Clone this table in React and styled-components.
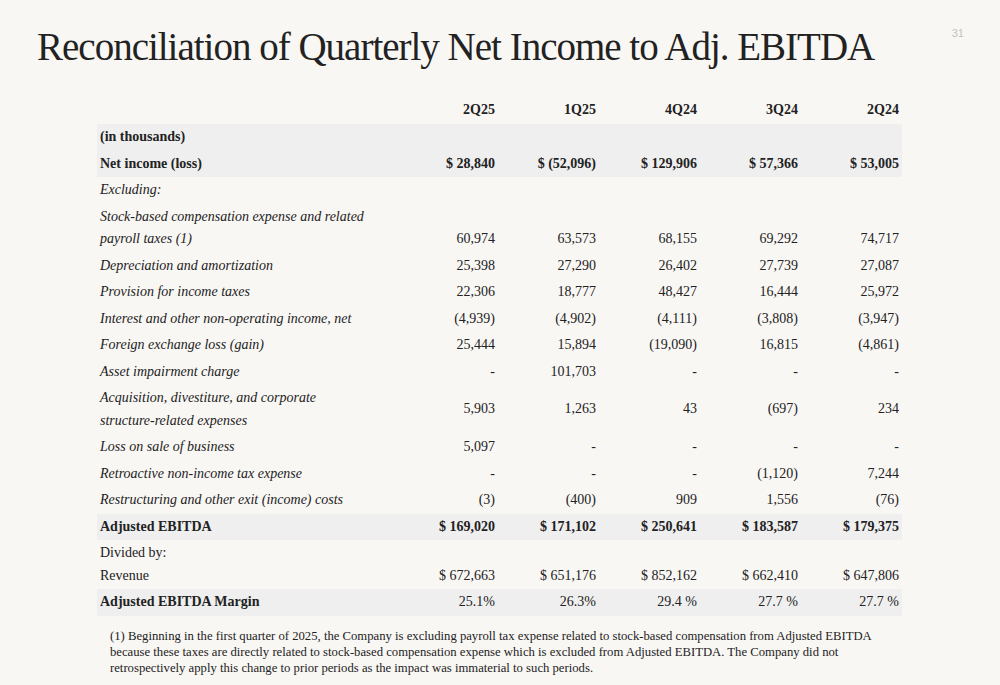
import React from "react";
import styled, { createGlobalStyle } from "styled-components";

const GlobalStyle = createGlobalStyle`
  html, body {
    margin: 0;
    padding: 0;
    background: #f9f7f4;
  }
  body {
    font-family: "Liberation Serif", "Times New Roman", serif;
    color: #222;
  }
`;

const periods = ["2Q25", "1Q25", "4Q24", "3Q24", "2Q24"];

const rows = [
  { label: "(in thousands)", kind: "bold", shade: true, values: [] },
  {
    label: "Net income (loss)",
    kind: "bold",
    shade: true,
    strong: true,
    values: ["$ 28,840", "$ (52,096)", "$ 129,906", "$ 57,366", "$ 53,005"],
  },
  { label: "Excluding:", kind: "italic", values: [] },
  {
    label: ["Stock-based compensation expense and related", "payroll taxes (1)"],
    kind: "italic",
    align: "bottom",
    values: ["60,974", "63,573", "68,155", "69,292", "74,717"],
  },
  {
    label: "Depreciation and amortization",
    kind: "italic",
    values: ["25,398", "27,290", "26,402", "27,739", "27,087"],
  },
  {
    label: "Provision for income taxes",
    kind: "italic",
    values: ["22,306", "18,777", "48,427", "16,444", "25,972"],
  },
  {
    label: "Interest and other non-operating income, net",
    kind: "italic",
    values: ["(4,939)", "(4,902)", "(4,111)", "(3,808)", "(3,947)"],
  },
  {
    label: "Foreign exchange loss (gain)",
    kind: "italic",
    values: ["25,444", "15,894", "(19,090)", "16,815", "(4,861)"],
  },
  {
    label: "Asset impairment charge",
    kind: "italic",
    values: ["-", "101,703", "-", "-", "-"],
  },
  {
    label: ["Acquisition, divestiture, and corporate", "structure-related expenses"],
    kind: "italic",
    values: ["5,903", "1,263", "43", "(697)", "234"],
  },
  {
    label: "Loss on sale of business",
    kind: "italic",
    values: ["5,097", "-", "-", "-", "-"],
  },
  {
    label: "Retroactive non-income tax expense",
    kind: "italic",
    values: ["-", "-", "-", "(1,120)", "7,244"],
  },
  {
    label: "Restructuring and other exit (income) costs",
    kind: "italic",
    values: ["(3)", "(400)", "909", "1,556", "(76)"],
  },
  {
    label: "Adjusted EBITDA",
    kind: "bold",
    shade: true,
    strong: true,
    values: ["$ 169,020", "$ 171,102", "$ 250,641", "$ 183,587", "$ 179,375"],
  },
  {
    label: ["Divided by:", "Revenue"],
    kind: "plain",
    align: "bottom",
    values: ["$ 672,663", "$ 651,176", "$ 852,162", "$ 662,410", "$ 647,806"],
  },
  {
    label: "Adjusted EBITDA Margin",
    kind: "bold",
    shade: true,
    values: ["25.1%", "26.3%", "29.4 %", "27.7 %", "27.7 %"],
  },
];

export default function App() {
  return (
    <>
      <GlobalStyle />
      <Page>
        <Header>
          <Title>Reconciliation of Quarterly Net Income to Adj. EBITDA</Title>
          <PageNumber>31</PageNumber>
        </Header>

        <Table>
          <colgroup>
            <col style={{ width: 300 }} />
            {periods.map((p) => (
              <col key={p} style={{ width: 101 }} />
            ))}
          </colgroup>
          <thead>
            <tr>
              <HeadCell />
              {periods.map((p) => (
                <HeadCell key={p} numeric>
                  {p}
                </HeadCell>
              ))}
            </tr>
          </thead>
          <tbody>
            {rows.map((row, i) => (
              <Row key={i} shade={row.shade}>
                <LabelCell kind={row.kind} align={row.align}>
                  {Array.isArray(row.label)
                    ? row.label.map((line) => <Line key={line}>{line}</Line>)
                    : row.label}
                </LabelCell>
                {periods.map((p, j) => (
                  <ValueCell key={p} strong={row.strong} align={row.align}>
                    {row.values[j] || ""}
                  </ValueCell>
                ))}
              </Row>
            ))}
          </tbody>
        </Table>

        <Footnote>
          (1) Beginning in the first quarter of 2025, the Company is excluding
          payroll tax expense related to stock-based compensation from Adjusted
          EBITDA because these taxes are directly related to stock-based
          compensation expense which is excluded from Adjusted EBITDA. The
          Company did not retrospectively apply this change to prior periods as
          the impact was immaterial to such periods.
        </Footnote>
      </Page>
    </>
  );
}

const Page = styled.div`
  width: 1000px;
  height: 685px;
  box-sizing: border-box;
  padding: 26px 36px 0 37px;
  display: flex;
  flex-direction: column;
  overflow: hidden;
`;

const Header = styled.div`
  display: flex;
  justify-content: space-between;
  align-items: flex-start;
`;

const Title = styled.h1`
  margin: 0;
  font-family: "Liberation Serif", serif;
  font-weight: 400;
  font-size: 39px;
  line-height: 42px;
  letter-spacing: -1px;
  white-space: nowrap;
  color: #222;
`;

const PageNumber = styled.span`
  margin-top: 1px;
  font-family: "Liberation Sans", Arial, sans-serif;
  font-size: 11px;
  color: #c4c2c0;
`;

const Table = styled.table`
  margin: 29px 0 0 60px;
  width: 805px;
  border-collapse: collapse;
  table-layout: fixed;
  font-size: 14px;
  line-height: 22.5px;
`;

const HeadCell = styled.th`
  padding: 2px 3px;
  font-weight: 700;
  text-align: ${(p) => (p.numeric ? "right" : "left")};
  height: 23px;
`;

const Row = styled.tr`
  background: ${(p) => (p.shade ? "#efefef" : "transparent")};
`;

const LabelCell = styled.td`
  padding: 2px 3px;
  white-space: nowrap;
  vertical-align: ${(p) => (p.align === "bottom" ? "bottom" : "middle")};
  font-weight: ${(p) => (p.kind === "bold" ? 700 : 400)};
  font-style: ${(p) => (p.kind === "italic" ? "italic" : "normal")};
`;

const Line = styled.span`
  display: block;
`;

const ValueCell = styled.td`
  padding: 2px 3px;
  text-align: right;
  white-space: nowrap;
  vertical-align: ${(p) => (p.align === "bottom" ? "bottom" : "middle")};
  font-weight: ${(p) => (p.strong ? 700 : 400)};
`;

const Footnote = styled.p`
  margin: 12px 0 0 73px;
  width: 780px;
  font-size: 12.7px;
  line-height: 16px;
  color: #222;
`;
